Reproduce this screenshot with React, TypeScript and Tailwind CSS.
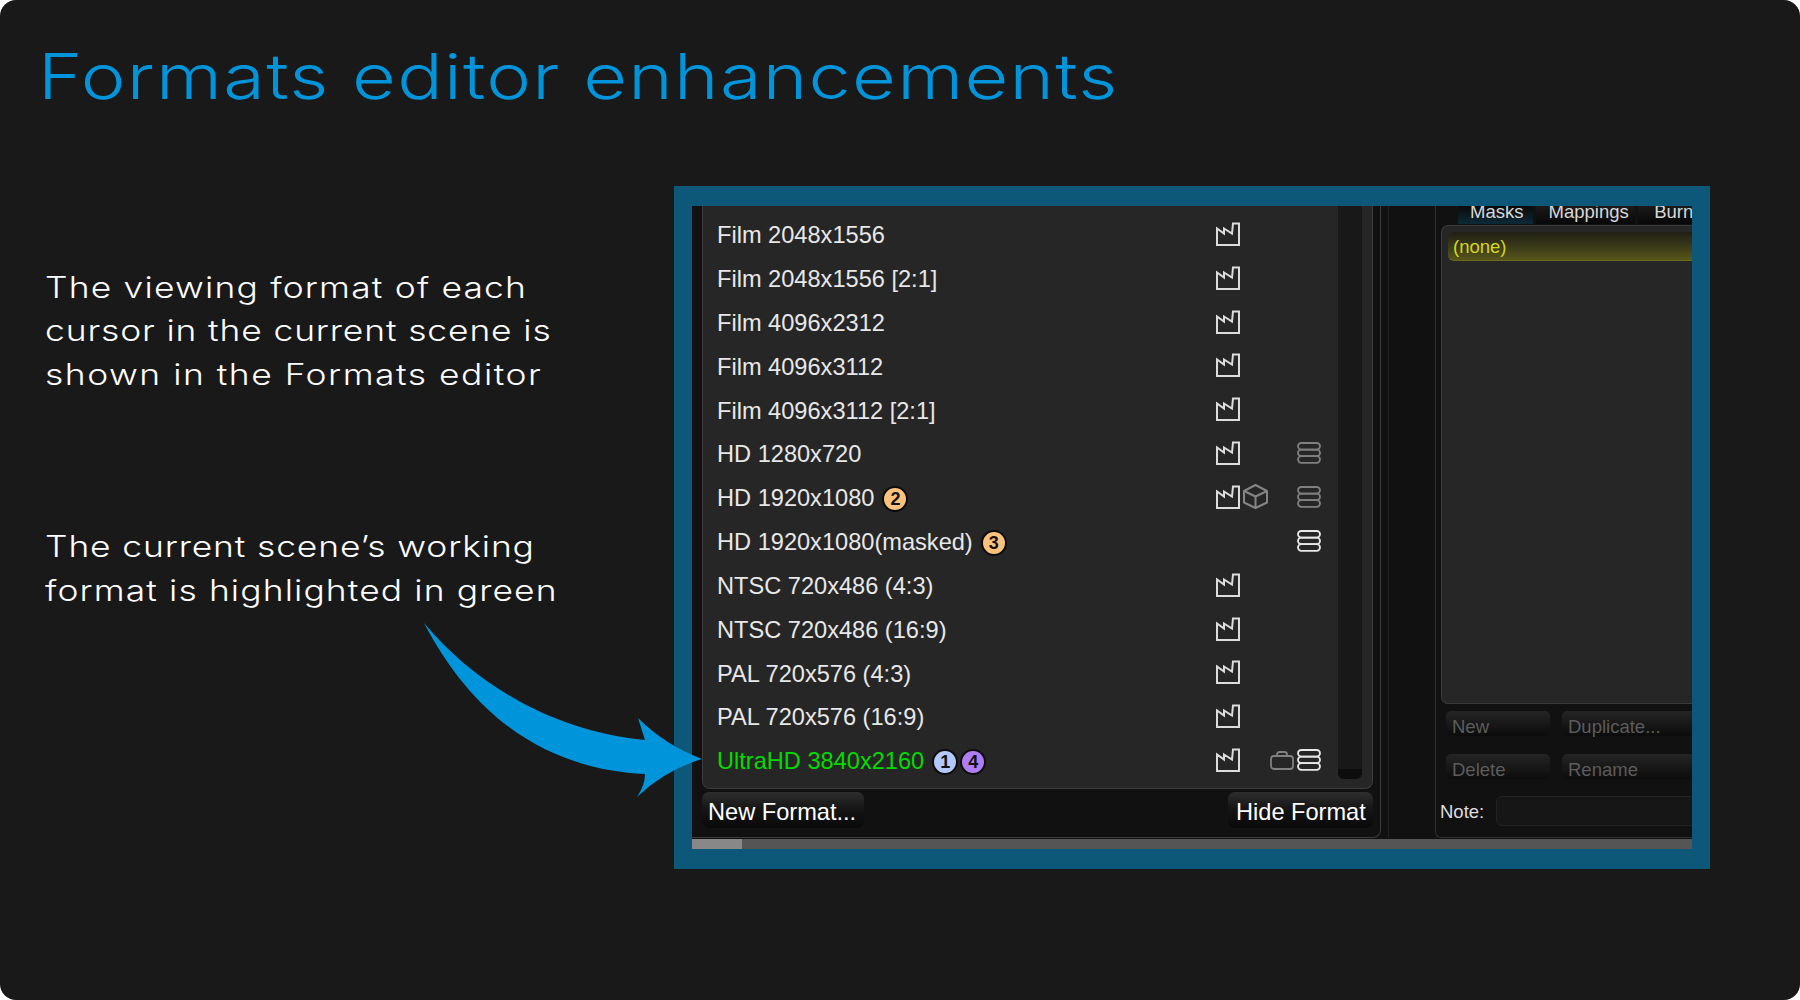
const UI_FONT = "font-['Liberation_Sans',Arial,sans-serif]";

type Row = {
  label: string;
  badges?: { n: number; color: string }[];
  factory?: boolean;
  cube?: boolean;
  bag?: boolean;
  stack?: "dim" | "on";
  green?: boolean;
};

const ORANGE = "bg-[#fbc27e]";
const ROWS: Row[] = [
  { label: "Film 2048x1556", factory: true },
  { label: "Film 2048x1556 [2:1]", factory: true },
  { label: "Film 4096x2312", factory: true },
  { label: "Film 4096x3112", factory: true },
  { label: "Film 4096x3112 [2:1]", factory: true },
  { label: "HD 1280x720", factory: true, stack: "dim" },
  { label: "HD 1920x1080", factory: true, cube: true, stack: "dim", badges: [{ n: 2, color: ORANGE }] },
  { label: "HD 1920x1080(masked)", stack: "on", badges: [{ n: 3, color: ORANGE }] },
  { label: "NTSC 720x486 (4:3)", factory: true },
  { label: "NTSC 720x486 (16:9)", factory: true },
  { label: "PAL 720x576 (4:3)", factory: true },
  { label: "PAL 720x576 (16:9)", factory: true },
  {
    label: "UltraHD 3840x2160",
    factory: true,
    bag: true,
    stack: "on",
    green: true,
    badges: [
      { n: 1, color: "bg-[#b4c9fb]" },
      { n: 4, color: "bg-[#b07cf5]" },
    ],
  },
];

function FactoryIcon() {
  return (
    <svg width="24" height="24" viewBox="0 0 24 24" fill="none" stroke="#dcdcdc" strokeWidth="2">
      <path d="M1 23V6.5L8 11.5V6.5L16 11.5L17 1.5H23V23Z" />
    </svg>
  );
}

function CubeIcon() {
  return (
    <svg width="25" height="25" viewBox="0 0 25 25" fill="none" stroke="#858585" strokeWidth="2" strokeLinejoin="round">
      <path d="M12.5 1L24 7V18.5L12.5 24L1 18.5V7Z" />
      <path d="M1 7L12.5 12.5L24 7M12.5 12.5V24" />
    </svg>
  );
}

function BagIcon() {
  return (
    <svg width="24" height="19" viewBox="0 0 24 19" fill="none" stroke="#808080" strokeWidth="1.8">
      <rect x="1" y="5" width="22" height="13" rx="3" />
      <path d="M7 5V3.5C7 2 8 1 9.5 1H14.5C16 1 17 2 17 3.5V5" />
    </svg>
  );
}

function StackIcon({ on }: { on: boolean }) {
  return (
    <svg width="24" height="22" viewBox="0 0 24 22" fill="none" stroke={on ? "#e8e8e8" : "#808080"} strokeWidth="1.8">
      <rect x="1" y="1" width="22" height="6.6" rx="3.3" />
      <rect x="1" y="7.6" width="22" height="6.6" rx="3.3" />
      <rect x="1" y="14.2" width="22" height="6.6" rx="3.3" />
    </svg>
  );
}

function Badge({ n, color }: { n: number; color: string }) {
  return (
    <span
      className={`flex h-[26px] w-[26px] shrink-0 items-center justify-center rounded-full border-2 border-[#0c0c0c] text-[18px] font-bold leading-none text-[#111] ${color}`}
    >
      {n}
    </span>
  );
}

function FormatRow({ row }: { row: Row }) {
  return (
    <div className="grid h-[43.85px] grid-cols-[498.5px_27.5px_27px_27px_24px] items-center">
      <div className="flex items-center">
        <span className={`text-[23.6px] leading-none ${row.green ? "text-[#00dc00]" : "text-[#e8e8e8]"}`}>{row.label}</span>
        {row.badges && (
          <span className="ml-[8px] flex gap-[2px]">
            {row.badges.map((b) => (
              <Badge key={b.n} n={b.n} color={b.color} />
            ))}
          </span>
        )}
      </div>
      <div className="mb-[4px] flex">{row.factory && <FactoryIcon />}</div>
      <div className="mb-[4px] flex">{row.cube && <CubeIcon />}</div>
      <div className="mb-[4px] flex">{row.bag && <BagIcon />}</div>
      <div className="mb-[4px] flex">{row.stack && <StackIcon on={row.stack === "on"} />}</div>
    </div>
  );
}

function FormatsPane() {
  return (
    <div className="h-[632px] w-[689px] shrink-0 rounded-br-[8px] border-r border-b border-[#3d3d3d] pl-[10px] pr-[7px]">
      <div className="flex h-[583px] rounded-b-[8px] border-x border-b border-[#3d3d3d] bg-[#262626]">
        <div className="w-[635px] shrink-0 pl-[14px] pt-[8px]">
          {ROWS.map((row) => (
            <FormatRow key={row.label} row={row} />
          ))}
        </div>
        <div className="flex h-[573px] w-[24px] shrink-0 flex-col justify-end rounded-b-[6px] bg-[#181818]">
          <div className="h-[10px] rounded-b-[6px] bg-[#0d0d0d]" />
        </div>
      </div>
      <div className="mt-[3px] flex justify-between text-[23.6px] leading-none text-white">
        <button type="button" className="flex h-[36px] w-[162px] items-center rounded-[7px] bg-gradient-to-b from-[#2e2e2e] via-[#141414] to-[#090909] pl-[6px] pt-[6px]">
          New Format...
        </button>
        <button type="button" className="flex h-[36px] w-[145px] items-center rounded-[7px] bg-gradient-to-b from-[#2e2e2e] via-[#141414] to-[#090909] pl-[8px] pt-[6px]">
          Hide Format
        </button>
      </div>
    </div>
  );
}

function DimButton({ label, wide }: { label: string; wide?: boolean }) {
  return (
    <div
      className={`flex h-[25px] shrink-0 items-center rounded-[5px] bg-gradient-to-b from-[#252525] to-[#0c0c0c] pl-[6px] pt-[7px] text-[18.5px] leading-none text-[#5c5c5c] ${wide ? "w-[200px]" : "w-[104px]"}`}
    >
      {label}
    </div>
  );
}

function MasksPane() {
  return (
    <div className="ml-[7px] flex">
      <div className="h-[632px] w-[47px] shrink-0 border-l border-[#222]" />
      <div className="h-[632px] w-[300px] shrink-0 rounded-bl-[6px] border-l border-b border-[#303030] text-[18.5px]">
        <div className="ml-[22px] flex h-[18px] leading-[12px] text-[#d8d8d8]">
          <div className="w-[77px] bg-gradient-to-b from-[#0a0a0a] to-[#0a2a38] pl-[12px]">Masks</div>
          <div className="ml-[3px] w-[103px] bg-gradient-to-b from-[#1a1a1a] to-[#080808] pl-[13px]">Mappings</div>
          <div className="ml-[3px] w-[100px] bg-gradient-to-b from-[#1a1a1a] to-[#080808] pl-[16px]">Burn</div>
        </div>
        <div className="ml-[5px] mt-px h-[479px] rounded-l-[7px] border-l border-y border-[#3a3a3a] bg-[#262626] pl-[6px] pt-[6px]">
          <div className="flex h-[29px] items-center rounded-l-[6px] border-b border-[#6a6a1e] bg-gradient-to-b from-[#1f1f14] to-[#56561a] pl-[5px] pt-[1px] text-[#d6d61a]">
            (none)
          </div>
        </div>
        <div className="ml-[10px] mt-[7px] flex gap-[12px]">
          <DimButton label="New" />
          <DimButton label="Duplicate..." wide />
        </div>
        <div className="ml-[10px] mt-[18px] flex gap-[12px]">
          <DimButton label="Delete" />
          <DimButton label="Rename" wide />
        </div>
        <div className="ml-[4px] mt-[17px] flex items-center">
          <span className="w-[56px] pt-[2px] text-[#dedede]">Note:</span>
          <div className="h-[30px] w-[240px] rounded-[6px] border border-[#222] bg-[#161616]" />
        </div>
      </div>
    </div>
  );
}

function Arrow() {
  return (
    <svg className="absolute left-[420px] top-[620px]" width="290" height="180" viewBox="420 620 290 180">
      <path
        fill="#0095db"
        d="M424 623C480 690 560 732 645 740L638 718Q665 745 702 759Q665 770 637 797Q645 785 645 774C560 770 480 730 424 623Z"
      />
    </svg>
  );
}

export default function App() {
  return (
    <div className="relative h-[1000px] w-[1800px] overflow-hidden rounded-[16px] bg-[#191919] font-['Inter',sans-serif]">
      <header className="h-[186px] pl-[38px] pt-[37px]">
        <h1 className="origin-left scale-x-[1.2] whitespace-nowrap text-[63px] font-light leading-[78px] tracking-[1.07px] text-[#0095db]">
          Formats editor enhancements
        </h1>
      </header>
      <div className="flex">
        <div className="w-[674px] shrink-0 pl-[45px] pt-[80px] text-[29.5px] font-light leading-[43.4px] tracking-[0.73px] text-white">
          <p className="origin-left scale-x-[1.2] whitespace-nowrap">
            <span className="tracking-[0.99px]">The viewing format of each</span>
            <br />
            cursor in the current scene is
            <br />
            <span className="tracking-[1.26px]">shown in the Formats editor</span>
          </p>
          <p className="mt-[129px] origin-left scale-x-[1.2] whitespace-nowrap">
            The current scene’s working
            <br />
            <span className="tracking-[0.93px]">format is highlighted in green</span>
          </p>
        </div>
        <div className="h-[683px] w-[1036px] shrink-0 border-x-[18px] border-y-[20px] border-[#0d5779]">
          <div className={`h-full overflow-hidden bg-[#111] ${UI_FONT}`}>
            <div className="flex h-[633px]">
              <FormatsPane />
              <MasksPane />
            </div>
            <div className="h-[10px] bg-[#555]">
              <div className="h-full w-[50px] bg-[#888]" />
            </div>
          </div>
        </div>
      </div>
      <Arrow />
    </div>
  );
}
